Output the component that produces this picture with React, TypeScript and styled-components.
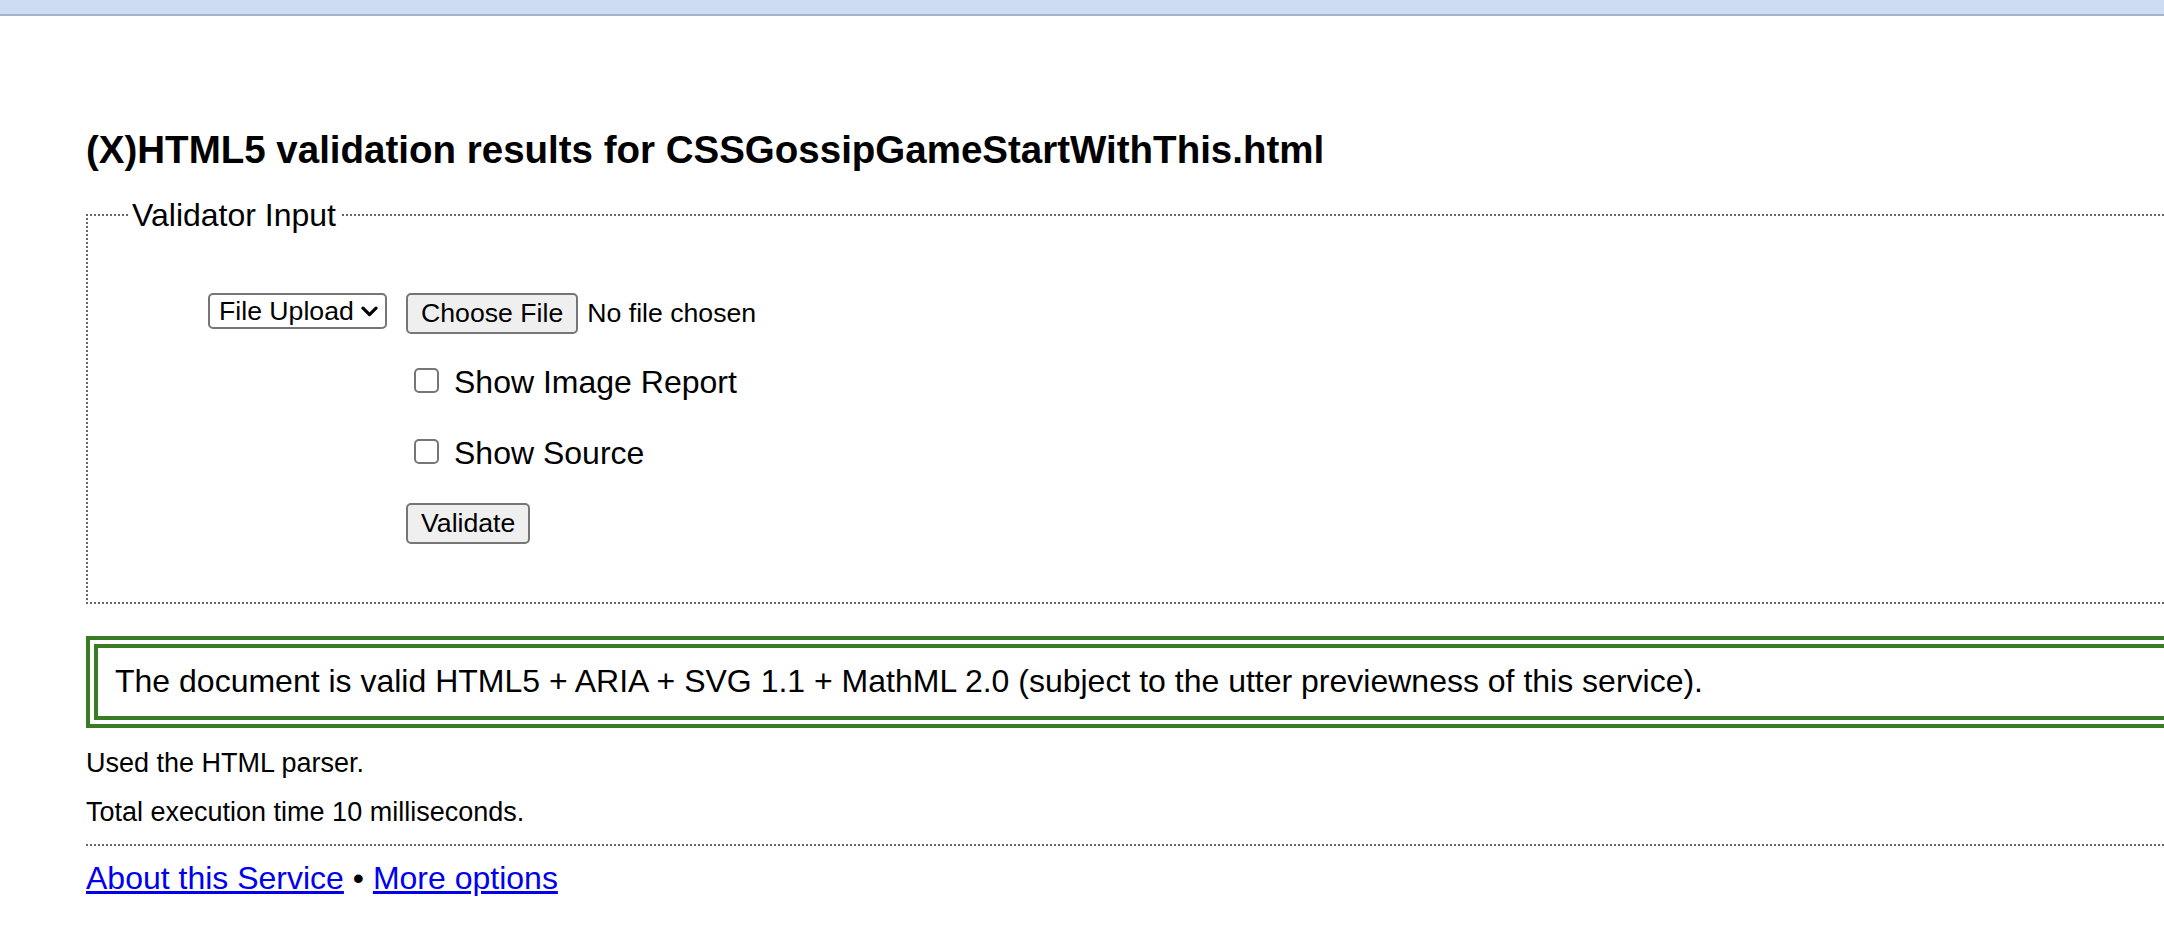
import React from "react";
import styled, { createGlobalStyle } from "styled-components";

const GlobalStyle = createGlobalStyle`
  html, body {
    margin: 0;
    padding: 0;
    background: #ffffff;
    overflow: hidden;
  }
  body {
    font-family: "Liberation Sans", Arial, Helvetica, sans-serif;
    color: #000000;
  }
`;

const Page = styled.div`
  width: 2164px;
  min-height: 952px;
  overflow: hidden;
`;

const TopBar = styled.header`
  height: 14px;
  background: #cddcf3;
  border-bottom: 2px solid #a3b4ca;
`;

const Main = styled.main`
  width: 2500px;
  padding: 0 0 0 86px;
  box-sizing: border-box;
`;

const Title = styled.h1`
  margin: 112px 0 0;
  font-size: 38.5px;
  line-height: 44px;
  font-weight: 700;
`;

const InputSet = styled.fieldset`
  margin: 25px 0 0;
  padding: 60px 0 58px 40px;
  border: 2px dotted #666666;
  min-width: 0;
`;

const Legend = styled.legend`
  margin: 0;
  padding: 0 4px;
  font-size: 32px;
  line-height: 36px;
`;

const FormArea = styled.div`
  margin-left: 80px;
  display: flex;
  flex-direction: column;
`;

const SourceRow = styled.div`
  display: flex;
  align-items: flex-start;
`;

const SelectWrap = styled.div`
  position: relative;
  display: inline-flex;
  margin-right: 19px;
`;

const Select = styled.select`
  appearance: none;
  -webkit-appearance: none;
  width: 179px;
  height: 36px;
  box-sizing: border-box;
  border: 2px solid #767676;
  border-radius: 5px;
  background: #ffffff;
  padding: 0 0 0 9px;
  font-family: "Liberation Sans", Arial, Helvetica, sans-serif;
  font-size: 26.67px;
  color: #000000;
`;

const Chevron = styled.svg`
  position: absolute;
  right: 9px;
  top: 13px;
  width: 17px;
  height: 11px;
  pointer-events: none;
`;

const Button = styled.button`
  height: 41px;
  box-sizing: border-box;
  padding: 0 13px;
  background: #efefef;
  border: 2px solid #767676;
  border-radius: 5px;
  font-family: "Liberation Sans", Arial, Helvetica, sans-serif;
  font-size: 26.67px;
  color: #000000;
  line-height: 1;
`;

const FileState = styled.span`
  margin-left: 9px;
  font-size: 26.67px;
  line-height: 41px;
`;

const Options = styled.div`
  margin-left: 198px;
  display: flex;
  flex-direction: column;
  align-items: flex-start;
`;

const CheckRow = styled.label<{ $mt: number }>`
  display: flex;
  align-items: flex-start;
  height: 37px;
  margin-top: ${(p) => p.$mt}px;
  font-size: 32px;
  line-height: 37px;
`;

const Check = styled.input`
  appearance: none;
  -webkit-appearance: none;
  width: 25px;
  height: 25px;
  box-sizing: border-box;
  margin: 4px 15px 0 8px;
  border: 2px solid #767676;
  border-radius: 5px;
  background: #ffffff;
`;

const SubmitRow = styled.div<{ $mt: number }>`
  margin-top: ${(p) => p.$mt}px;
`;

const Success = styled.div`
  margin-top: 32px;
  border: 12px double #3a7c24;
  padding: 13px 17px 15px;
  font-size: 32px;
  line-height: 40px;
`;

const Note = styled.p<{ $mt: number }>`
  margin: ${(p) => p.$mt}px 0 0;
  font-size: 27px;
  line-height: 32px;
`;

const Rule = styled.hr`
  margin: 16px 0 0;
  height: 0;
  border: none;
  border-top: 2px dotted #666666;
`;

const Footer = styled.p`
  margin: 14px 0 0;
  font-size: 32px;
  line-height: 37px;
`;

const Link = styled.a`
  color: #0000ee;
  text-decoration: underline;
`;

export default function App() {
  return (
    <Page>
      <GlobalStyle />
      <TopBar />
      <Main>
        <Title>(X)HTML5 validation results for CSSGossipGameStartWithThis.html</Title>
        <InputSet>
          <Legend>Validator Input</Legend>
          <FormArea>
            <SourceRow>
              <SelectWrap>
                <Select defaultValue="file">
                  <option value="file">File Upload</option>
                  <option value="url">Address</option>
                  <option value="text">Text Field</option>
                </Select>
                <Chevron viewBox="0 0 17 11">
                  <path
                    d="M2 2.2 L8.5 8.6 L15 2.2"
                    fill="none"
                    stroke="#000"
                    strokeWidth="3.2"
                    strokeLinecap="round"
                    strokeLinejoin="round"
                  />
                </Chevron>
              </SelectWrap>
              <Button type="button">Choose File</Button>
              <FileState>No file chosen</FileState>
            </SourceRow>
            <Options>
              <CheckRow $mt={30}>
                <Check type="checkbox" />
                Show Image Report
              </CheckRow>
              <CheckRow $mt={34}>
                <Check type="checkbox" />
                Show Source
              </CheckRow>
              <SubmitRow $mt={31}>
                <Button type="submit">Validate</Button>
              </SubmitRow>
            </Options>
          </FormArea>
        </InputSet>
        <Success>
          The document is valid HTML5 + ARIA + SVG 1.1 + MathML 2.0 (subject to the utter previewness of this service).
        </Success>
        <Note $mt={19}>Used the HTML parser.</Note>
        <Note $mt={17}>Total execution time 10 milliseconds.</Note>
        <Rule />
        <Footer>
          <Link href="#about">About this Service</Link> • <Link href="#options">More options</Link>
        </Footer>
      </Main>
    </Page>
  );
}
